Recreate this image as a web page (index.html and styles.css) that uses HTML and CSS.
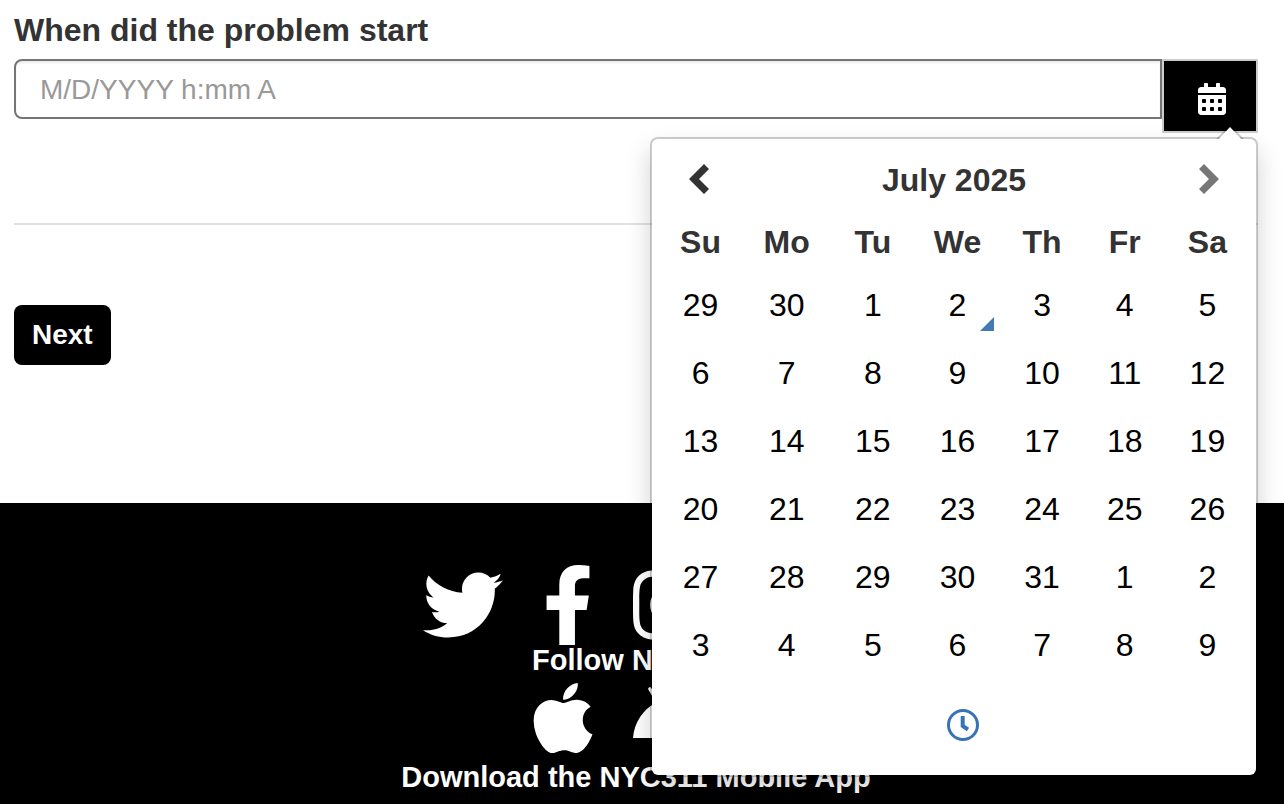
FILE: index.html
```html
<!DOCTYPE html>
<html lang="en">
<head>
<meta charset="utf-8">
<title>NYC311</title>
<meta name="viewport" content="width=device-width, initial-scale=1">
<link rel="stylesheet" href="styles.css">
</head>
<body>
<main class="content">
  <form class="problem-form">
    <label class="field-label" for="start">When did the problem start</label>
    <div class="input-group">
      <input class="date-input" id="start" type="text" placeholder="M/D/YYYY h:mm A">
      <button class="picker-toggle" type="button" aria-label="Choose a date">
        <svg class="calendar-icon" viewBox="0 0 448 512" aria-hidden="true"><path d="M0 464c0 26.500 21.500 48 48 48h352c26.500 0 48-21.500 48-48V192H0v272zm320-196c0-6.600 5.400-12 12-12h40c6.600 0 12 5.400 12 12v40c0 6.600-5.400 12-12 12h-40c-6.600 0-12-5.400-12-12v-40zm0 128c0-6.600 5.400-12 12-12h40c6.600 0 12 5.400 12 12v40c0 6.600-5.400 12-12 12h-40c-6.600 0-12-5.400-12-12v-40zM192 268c0-6.600 5.400-12 12-12h40c6.600 0 12 5.400 12 12v40c0 6.600-5.400 12-12 12h-40c-6.600 0-12-5.400-12-12v-40zm0 128c0-6.600 5.400-12 12-12h40c6.600 0 12 5.400 12 12v40c0 6.600-5.400 12-12 12h-40c-6.600 0-12-5.400-12-12v-40zM64 268c0-6.600 5.400-12 12-12h40c6.600 0 12 5.400 12 12v40c0 6.600-5.400 12-12 12H76c-6.600 0-12-5.400-12-12v-40zm0 128c0-6.600 5.400-12 12-12h40c6.600 0 12 5.400 12 12v40c0 6.600-5.400 12-12 12H76c-6.600 0-12-5.400-12-12v-40zM400 64h-48V16c0-8.800-7.200-16-16-16h-32c-8.800 0-16 7.200-16 16v48H160V16c0-8.800-7.200-16-16-16h-32c-8.800 0-16 7.200-16 16v48H48C21.500 64 0 85.500 0 112v48h448v-48c0-26.500-21.500-48-48-48z"/></svg>
      </button>
      <div class="picker">
        <svg class="picker-arrow" viewBox="0 0 28 14" aria-hidden="true"><path class="arrow-edge" d="M0 12L14 -2L28 12Z"/><path class="arrow-fill" d="M1 14L14 0L27 14Z"/></svg>
        <table class="calendar">
          <colgroup><col class="col-narrow"><col class="col-widest"><col class="col-narrow"><col class="col-wide"><col class="col-narrow"><col class="col-medium"><col class="col-narrow"></colgroup>
          <thead>
            <tr class="month-row">
              <th><button class="previous" type="button" aria-label="Previous month"><svg class="chevron" viewBox="0 0 20 30" aria-hidden="true"><path d="M15 0L20 5L10 15L20 25L15 30L0 15Z"/></svg></button></th>
              <th colspan="5"><button class="month" type="button">July 2025</button></th>
              <th><button class="next" type="button" aria-label="Next month"><svg class="chevron chevron-muted" viewBox="0 0 20 30" aria-hidden="true"><path d="M5 0L0 5L10 15L0 25L5 30L20 15Z"/></svg></button></th>
            </tr>
            <tr class="weekday-row"><th>Su</th><th>Mo</th><th>Tu</th><th>We</th><th>Th</th><th>Fr</th><th>Sa</th></tr>
          </thead>
          <tbody>
            <tr><td><button type="button">29</button></td><td><button type="button">30</button></td><td><button type="button">1</button></td><td><button class="today" type="button">2</button></td><td><button type="button">3</button></td><td><button type="button">4</button></td><td><button type="button">5</button></td></tr>
            <tr><td><button type="button">6</button></td><td><button type="button">7</button></td><td><button type="button">8</button></td><td><button type="button">9</button></td><td><button type="button">10</button></td><td><button type="button">11</button></td><td><button type="button">12</button></td></tr>
            <tr><td><button type="button">13</button></td><td><button type="button">14</button></td><td><button type="button">15</button></td><td><button type="button">16</button></td><td><button type="button">17</button></td><td><button type="button">18</button></td><td><button type="button">19</button></td></tr>
            <tr><td><button type="button">20</button></td><td><button type="button">21</button></td><td><button type="button">22</button></td><td><button type="button">23</button></td><td><button type="button">24</button></td><td><button type="button">25</button></td><td><button type="button">26</button></td></tr>
            <tr><td><button type="button">27</button></td><td><button type="button">28</button></td><td><button type="button">29</button></td><td><button type="button">30</button></td><td><button type="button">31</button></td><td><button type="button">1</button></td><td><button type="button">2</button></td></tr>
            <tr><td><button type="button">3</button></td><td><button type="button">4</button></td><td><button type="button">5</button></td><td><button type="button">6</button></td><td><button type="button">7</button></td><td><button type="button">8</button></td><td><button type="button">9</button></td></tr>
          </tbody>
        </table>
        <div class="picker-switch">
          <button class="time-button" type="button" aria-label="Select time">
            <svg class="clock-icon" viewBox="0 0 32 32" aria-hidden="true"><circle cx="16" cy="16" r="14.500"/><path class="clock-hands" d="M15.700 7V17L21 20.500"/></svg>
          </button>
        </div>
      </div>
    </div>
    <hr class="divider">
    <button class="next-button" type="button">Next</button>
  </form>
</main>
<footer class="footer">
  <div class="icon-row">
    <a href="#twitter" aria-label="Twitter"><svg class="brand" viewBox="0 0 512 512"><path d="M459.370 151.716c.325 4.548.325 9.097.325 13.645 0 138.720-105.583 298.558-298.558 298.558-59.452 0-114.680-17.219-161.137-47.106 8.447.974 16.568 1.299 25.340 1.299 49.055 0 94.213-16.568 130.274-44.832-46.132-.975-84.792-31.188-98.112-72.772 6.498.974 12.995 1.624 19.818 1.624 9.421 0 18.843-1.300 27.614-3.573-48.081-9.747-84.143-51.980-84.143-102.985v-1.299c13.969 7.797 30.214 12.670 47.431 13.319-28.264-18.843-46.781-51.005-46.781-87.391 0-19.492 5.197-37.360 14.294-52.954 51.655 63.675 129.300 105.258 216.365 109.807-1.624-7.797-2.599-15.918-2.599-24.040 0-57.828 46.782-104.934 104.934-104.934 30.213 0 57.502 12.670 76.670 33.137 23.715-4.548 46.456-13.320 66.599-25.340-7.798 24.366-24.366 44.833-46.132 57.827 21.117-2.273 41.584-8.122 60.426-16.243-14.292 20.791-32.161 39.308-52.628 54.253z"/></svg></a>
    <a href="#facebook" aria-label="Facebook"><svg class="brand" viewBox="0 0 320 512"><path d="M279.140 288l14.220-92.660h-88.910v-60.130c0-25.350 12.420-50.060 52.240-50.060h40.420V6.260S260.430 0 225.360 0c-73.220 0-121.080 44.380-121.080 124.720v70.620H22.890V288h81.390v224h100.170V288z"/></svg></a>
    <a href="#instagram" aria-label="Instagram"><svg class="brand" viewBox="0 0 448 512"><path d="M224.100 141c-63.600 0-114.900 51.300-114.900 114.900s51.300 114.900 114.900 114.900S339 319.500 339 255.900 287.700 141 224.100 141zm0 189.600c-41.100 0-74.700-33.500-74.700-74.700s33.500-74.700 74.700-74.700 74.700 33.500 74.700 74.700-33.600 74.700-74.700 74.700zm146.400-194.300c0 14.900-12 26.800-26.800 26.800-14.900 0-26.800-12-26.800-26.800s12-26.800 26.800-26.800 26.800 12 26.800 26.800zm76.100 27.200c-1.700-35.900-9.900-67.700-36.200-93.900-26.200-26.200-58-34.400-93.900-36.200-37-2.100-147.900-2.100-184.900 0-35.800 1.700-67.600 9.900-93.900 36.100s-34.400 58-36.200 93.900c-2.100 37-2.100 147.900 0 184.900 1.700 35.900 9.900 67.700 36.200 93.900s58 34.400 93.900 36.200c37 2.100 147.900 2.100 184.900 0 35.900-1.700 67.700-9.900 93.900-36.200 26.200-26.200 34.400-58 36.200-93.900 2.100-37 2.100-147.800 0-184.800zM398.800 388c-7.800 19.600-22.900 34.700-42.600 42.600-29.500 11.700-99.500 9-132.100 9s-102.700 2.600-132.100-9c-19.600-7.800-34.700-22.900-42.600-42.600-11.700-29.500-9-99.500-9-132.100s-2.600-102.700 9-132.100c7.800-19.600 22.900-34.700 42.600-42.600 29.500-11.700 99.500-9 132.100-9s102.700-2.600 132.100 9c19.600 7.800 34.700 22.900 42.600 42.600 11.700 29.500 9 99.500 9 132.100s2.700 102.700-9 132.100z"/></svg></a>
    <a href="#youtube" aria-label="YouTube"><svg class="brand" viewBox="0 0 576 512"><path d="M100 64H476Q550 64 550 140V372Q550 448 476 448H100Q26 448 26 372V140Q26 64 100 64ZM232 178V334L376 256Z"/></svg></a>
  </div>
  <p class="footer-text">Follow NYC311</p>
  <div class="icon-row icon-row-apps">
    <a href="#ios" aria-label="iOS app"><svg class="brand" viewBox="0 0 384 512"><path d="M318.700 268.700c-.2-36.700 16.400-64.400 50-84.800-18.800-26.900-47.200-41.700-84.700-44.600-35.500-2.800-74.300 20.700-88.500 20.700-15 0-49.400-19.700-76.400-19.700C63.300 141.200 4 184.800 4 273.500q0 39.300 14.400 81.200c12.800 36.700 59 126.700 107.200 125.200 25.200-.6 43-17.900 75.800-17.900 31.800 0 48.300 17.900 76.400 17.900 48.600-.7 90.400-82.500 102.600-119.300-65.200-30.700-61.700-90-61.700-91.900zm-56.600-164.200c27.300-32.400 24.800-61.900 24-72.500-24.100 1.400-52 16.400-67.900 34.900-17.500 19.800-27.800 44.300-25.600 71.900 26.100 2 49.900-11.400 69.500-34.300z"/></svg></a>
    <a href="#android" aria-label="Android app"><svg class="brand" viewBox="0 0 576 512"><path d="M420.550 301.930a24 24 0 1 1 24-24 24 24 0 0 1-24 24m-265.100 0a24 24 0 1 1 24-24 24 24 0 0 1-24 24m273.700-144.480l47.940-83a10 10 0 1 0-17.270-10l-48.540 84.070a301.250 301.250 0 0 0-246.560 0L116.180 64.450a10 10 0 1 0-17.270 10l47.940 83C64.530 202.220 8.240 285.550 0 384H576c-8.240-98.450-64.540-181.780-146.850-226.550"/></svg></a>
  </div>
  <p class="footer-text">Download the NYC311 Mobile App</p>
</footer>
</body>
</html>
```
FILE: styles.css
```css
* {
  box-sizing: border-box;
}

body {
  margin: 0;
  min-height: 100vh;
  display: flex;
  flex-direction: column;
  background: #fff;
  color: #333;
  font-family: "Liberation Sans", Arial, sans-serif;
  font-size: 28px;
}

button,
input {
  font: inherit;
}

button {
  margin: 0;
  padding: 0;
  border: 0;
  background: none;
  color: inherit;
  cursor: pointer;
}

svg {
  display: block;
}

.content {
  padding: 7px 26px 138px 14px;
}

.field-label {
  display: block;
  margin-bottom: 6px;
  font-size: 32px;
  font-weight: 700;
  line-height: 46px;
}

.input-group {
  position: relative;
  display: flex;
  align-items: flex-start;
}

.date-input {
  flex: 1;
  min-width: 0;
  height: 60px;
  padding: 2px 24px 0;
  border: 2px solid #757575;
  border-radius: 8px 0 0 8px;
  background: #fff;
  box-shadow: inset 0 2px 2px rgba(0, 0, 0, 0.075);
  color: #555;
}

.date-input::placeholder {
  color: #999;
  opacity: 1;
}

.picker-toggle {
  display: flex;
  align-items: center;
  justify-content: center;
  width: 96px;
  height: 74px;
  padding: 6px 0 0 4px;
  border: 2px solid #ccc;
  background: #000;
}

.calendar-icon {
  width: 28px;
  height: 32px;
  fill: #fff;
}

.picker {
  position: absolute;
  z-index: 1;
  top: 78px;
  right: 0;
  width: 608px;
  padding: 8px;
  border: 2px solid rgba(0, 0, 0, 0.2);
  border-radius: 8px;
  background: #fff;
  background-clip: padding-box;
  box-shadow: 0 12px 24px rgba(0, 0, 0, 0.175);
}

.picker-arrow {
  position: absolute;
  top: -12px;
  right: 12px;
  width: 28px;
  height: 14px;
}

.arrow-edge {
  fill: rgba(0, 0, 0, 0.2);
}

.arrow-fill {
  fill: #fff;
}

.calendar {
  width: 100%;
  border-collapse: collapse;
  table-layout: fixed;
  font-size: 32px;
}

.col-narrow {
  width: 81px;
}

.col-medium {
  width: 84px;
}

.col-wide {
  width: 88px;
}

.col-widest {
  width: 91px;
}

.calendar th,
.calendar td {
  padding: 0;
  text-align: center;
}

.calendar button {
  position: relative;
  display: flex;
  align-items: center;
  justify-content: center;
  width: 100%;
  height: 68px;
}

.calendar .month-row button {
  height: 64px;
}

.calendar .month {
  padding-top: 2px;
}

.calendar .previous {
  padding-right: 4px;
}

.calendar .next {
  padding-left: 4px;
}

.weekday-row {
  height: 60px;
}

.weekday-row th {
  padding-top: 2px;
}

.calendar tbody {
  color: #000;
}

.today::after {
  content: "";
  position: absolute;
  right: 8px;
  bottom: 8px;
  border-bottom: 14px solid #4479b5;
  border-left: 14px solid transparent;
}

.chevron {
  width: 20px;
  height: 30px;
  fill: #333;
}

.chevron-muted {
  fill: #777;
}

.picker-switch {
  display: flex;
  justify-content: center;
  padding-left: 18px;
}

.time-button {
  padding: 30px 24px 26px;
}

.clock-icon {
  width: 32px;
  height: 32px;
  fill: none;
  stroke: #3873b5;
  stroke-width: 3;
}

.clock-hands {
  stroke-width: 4;
}

.divider {
  height: 2px;
  margin: 90px 0 80px;
  border: 0;
  background: #e2e2e2;
}

.next-button {
  display: block;
  padding: 0 18px;
  border-radius: 8px;
  background: #000;
  color: #fff;
  font-weight: 700;
  line-height: 60px;
}

.footer {
  flex: 1;
  padding: 62px 26px 12px 14px;
  background: #000;
  color: #fff;
  text-align: center;
}

.icon-row {
  display: flex;
  justify-content: center;
  gap: 40px;
  padding-right: 16px;
}

.icon-row-apps {
  margin: 3px 0 4px;
}

.brand {
  height: 80px;
  fill: #fff;
}

.footer-text {
  margin: 0;
  font-size: 29px;
  font-weight: 700;
  line-height: 30px;
}
```
